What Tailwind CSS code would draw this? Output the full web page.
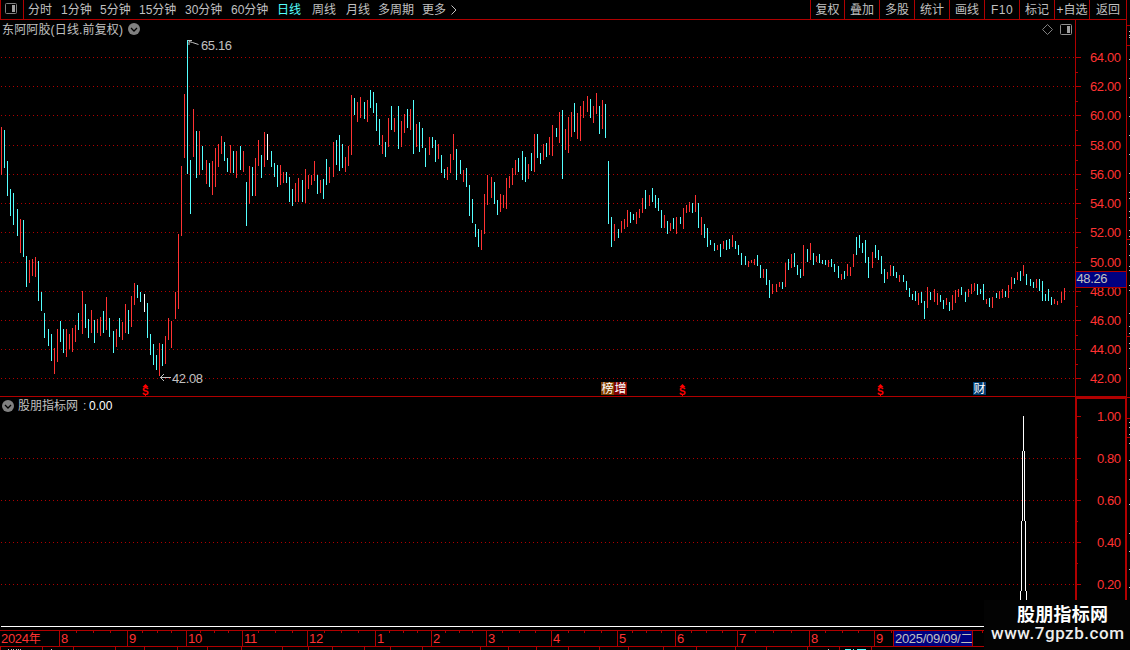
<!DOCTYPE html>
<html lang="zh-CN">
<head>
  <meta charset="UTF-8">
  <meta name="viewport" content="width=device-width, initial-scale=1.0">
  <title>东阿阿胶 日线</title>
  <script src="https://cdn.jsdelivr.net/npm/@tailwindcss/browser@4"></script>
</head>
<body class="relative flex h-[650px] w-[1130px] overflow-hidden bg-black font-['Liberation_Sans','Noto_Sans_CJK_SC',sans-serif] text-[12px] leading-none text-[#c0c0c0]">
  <div class="flex w-[1127px] flex-col">

    <!-- Toolbar -->
    <header class="flex h-5 border-b border-[#b00000] whitespace-nowrap">
      <div class="w-6 border-x border-[#b00000] pt-[3px] pl-1">
        <svg width="12" height="11" viewBox="0 0 12 11"><rect x=".5" y=".5" width="11" height="10" rx="1" fill="none" stroke="#808080"/><rect x="7" y="2" width="3" height="7" fill="#a0a0a0"/></svg>
      </div>
      <nav class="flex flex-1 items-center pl-1">
        <span class="w-[33px]">分时</span>
        <span class="w-[39px]">1分钟</span>
        <span class="w-[39px]">5分钟</span>
        <span class="w-[46px]">15分钟</span>
        <span class="w-[46px]">30分钟</span>
        <span class="w-[46px]">60分钟</span>
        <span class="w-[35px] text-[#54ffff]">日线</span>
        <span class="w-[34px]">周线</span>
        <span class="w-[32px]">月线</span>
        <span class="w-[44px]">多周期</span>
        <span class="w-[29px]">更多</span>
        <svg width="6" height="10" viewBox="0 0 6 10"><path d="M.5 .5L5 5L.5 9.5" fill="none" stroke="#c0c0c0"/></svg>
      </nav>
      <div class="flex w-[317px] border-r border-[#b00000] *:flex *:items-center *:justify-center *:border-l *:border-[#b00000]">
        <span class="w-[34px]">复权</span>
        <span class="w-[35px]">叠加</span>
        <span class="w-[35px]">多股</span>
        <span class="w-[35px]">统计</span>
        <span class="w-[35px]">画线</span>
        <span class="w-[35px] tracking-[0.5px]">F10</span>
        <span class="w-[35px]">标记</span>
        <span class="w-[35px]">+自选</span>
        <span class="w-[37px]">返回</span>
      </div>
    </header>

    <!-- Price chart -->
    <section class="flex h-[377px] border-b border-[#b00000]">
      <div class="flex w-[1075px] flex-col">
        <div class="flex h-[18px] items-center pr-[3px] pl-0.5">
          <span class="w-[126px] pt-px tracking-[0.15px] whitespace-nowrap">东阿阿胶(日线.前复权)</span>
          <svg width="12" height="12" viewBox="0 0 12 12"><circle cx="6" cy="6" r="6" fill="#808080"/><path d="M3 5L6 8L9 5" fill="none" stroke="#000" stroke-width="1.3"/></svg>
          <svg class="ml-auto" width="11" height="11" viewBox="0 0 11 11"><path d="M5.5 .5L10.5 5.5L5.5 10.5L.5 5.5Z" fill="none" stroke="#808080"/></svg>
          <svg class="ml-[7px]" width="12" height="11" viewBox="0 0 12 11"><rect x=".5" y=".5" width="11" height="10" rx="1" fill="none" stroke="#909090"/><rect x="7" y="2" width="3" height="7" fill="#a0a0a0"/></svg>
        </div>
        <svg id="price" width="1075" height="358" viewBox="0 38 1075 358">
          <g id="price-grid"></g>
          <g id="bars" shape-rendering="crispEdges"></g>
          <path d="M188 40.500H192M189 45V41.500L192.500 42.500L198.500 44.500" fill="none" stroke="#c0c0c0"/>
          <text x="201" y="50" font-size="13" textLength="31" fill="#c0c0c0">65.16</text>
          <path d="M160 377.500H171M164 374L160.500 377.500L164 381" fill="none" stroke="#c0c0c0"/>
          <text x="172" y="383" font-size="13" textLength="31" fill="#c0c0c0">42.08</text>
          <g id="dividends"></g>
          <g font-size="12" fill="#fff">
            <rect x="601" y="382" width="13" height="13" fill="#804000"/><text x="601.500" y="393">榜</text>
            <rect x="614" y="382" width="13" height="13" fill="#800000"/><text x="614.500" y="393">增</text>
            <rect x="973" y="382" width="13" height="13" fill="#003b70"/><text x="973.500" y="393">财</text>
          </g>
        </svg>
      </div>
      <svg id="price-axis" class="border-r border-l border-[#b00000]" width="52" height="376" viewBox="1076 20 50 376"></svg>
    </section>

    <!-- Indicator chart -->
    <section class="flex h-[233px]">
      <div class="flex w-[1075px] flex-col">
        <div class="flex h-[17px] items-center pl-0.5">
          <svg width="12" height="12" viewBox="0 0 12 12"><circle cx="6" cy="6" r="6" fill="#808080"/><path d="M3 5L6 8L9 5" fill="none" stroke="#000" stroke-width="1.3"/></svg>
          <span class="ml-1 w-[65px]">股朋指标网</span>
          <span class="w-1.5">:</span>
          <span class="text-white">0.00</span>
        </div>
        <svg width="1075" height="216" viewBox="0 414 1075 216" shape-rendering="crispEdges">
          <g id="signal-grid"></g>
          <path d="M1 626.500H1075M1023.500 416V451M1022.500 451V521M1024.500 451V521M1021.500 521V591M1025.500 521V591M1020.500 591V626M1026.500 591V626" fill="none" stroke="#fff"/>
        </svg>
      </div>
      <svg id="signal-axis" class="border-x-2 border-t-2 border-[#b00000]" width="52" height="233" viewBox="1077 399 48 231"></svg>
    </section>

    <!-- Time axis -->
    <footer class="flex h-[17px] border-y border-[#b00000] text-[13px] tracking-[-0.3px] text-[#ff3232] *:border-r *:border-[#b00000] *:pt-px *:pl-px">
      <span class="w-[60px]">2024<span class="text-[12px]">年</span></span>
      <span class="w-[68px]">8</span>
      <span class="w-[59px]">9</span>
      <span class="w-[56px]">10</span>
      <span class="w-[65px]">11</span>
      <span class="w-[68px]">12</span>
      <span class="w-[56px]">1</span>
      <span class="w-[55px]">2</span>
      <span class="w-[65px]">3</span>
      <span class="w-[66px]">4</span>
      <span class="w-[58px]">5</span>
      <span class="w-[62px]">6</span>
      <span class="w-[72px]">7</span>
      <span class="w-[65px]">8</span>
      <span class="w-[19px]">9</span>
      <span class="w-[79px] bg-[#000080] whitespace-nowrap text-[#c0c0c0]">2025/09/09/<span class="text-[12px]">二</span></span>
    </footer>
    <svg id="tabs" width="1127" height="3" viewBox="0 647 1127 3" shape-rendering="crispEdges"></svg>
  </div>

  <!-- Edge of the neighbouring panel -->
  <svg id="edge" width="3" height="650" viewBox="1127 0 3 650" shape-rendering="crispEdges"></svg>

  <!-- Minor ticks over the time axis -->
  <svg id="time-ticks" class="absolute top-[631px] left-0" width="984" height="2" viewBox="0 631 984 2" shape-rendering="crispEdges"></svg>

  <!-- Site mark -->
  <div class="absolute top-[600px] left-[984px] h-[50px] w-[146px] bg-[#030303]">
    <svg width="146" height="50" viewBox="984 600 146 50" fill="#fff">
      <text x="1017" y="621" font-size="18" font-weight="700" textLength="91">股朋指标网</text>
      <text x="991" y="639" font-size="17" font-weight="500" textLength="133" font-family="Roboto" fill="#eee">www.7gpzb.com</text>
    </svg>
  </div>

  <script>
    // x, top, bottom, colour (r = up, c = down, w = flat)
    const bars = `1 127 175 r,4 130 168 c,7 161 196 c,10 189 216 c,13 193 225 c,17 209 236 c,20 219 253 r,23 220 257 c,26 256 287 c,29 260 283 r,
32 259 276 r,35 257 277 r,38 261 301 c,41 292 311 c,44 313 338 c,48 329 346 c,51 334 361 c,54 348 374 r,57 329 362 r,60 321 342 c,
63 329 353 c,66 329 357 r,69 334 349 r,72 328 352 r,75 325 342 r,78 313 330 c,82 291 334 r,85 304 328 c,88 319 338 c,91 310 333 r,
94 320 343 c,97 319 333 r,100 317 336 r,103 311 333 c,106 297 330 r,109 318 337 c,113 331 353 c,116 329 347 r,119 318 337 c,122 322 340 r,
125 304 333 r,128 310 334 c,131 296 327 r,134 283 305 r,137 285 298 c,140 292 302 c,144 294 312 w,147 303 338 c,150 334 355 c,153 344 365 c,
156 355 370 c,159 343 376 r,162 344 366 c,165 336 364 r,168 318 340 r,171 321 348 r,175 292 319 r,178 234 309 r,181 166 236 r,184 94 158 r,
187 40 174 c,190 160 214 c,193 109 157 r,196 131 178 c,199 131 175 r,202 146 170 c,206 160 184 r,209 163 187 c,212 161 195 r,215 148 187 r,
218 144 167 r,221 136 154 r,224 142 161 c,227 158 172 c,230 145 173 r,233 151 173 c,236 151 178 r,240 146 170 c,243 151 172 r,246 182 226 c,
249 166 204 r,252 167 196 c,255 158 196 r,258 140 166 r,261 155 178 c,264 132 167 r,267 134 160 w,271 151 167 c,274 163 177 c,277 165 187 c,
280 165 185 r,283 172 183 r,286 172 183 c,289 177 202 c,292 189 206 c,295 183 202 r,298 178 202 r,302 180 202 c,305 169 203 r,308 175 189 r,
311 175 185 r,314 161 181 r,317 175 194 c,320 180 193 r,323 179 199 c,326 159 185 c,329 167 183 r,333 142 177 r,336 140 165 c,339 135 171 c,
342 144 168 c,345 157 172 r,348 146 166 r,351 95 155 r,354 98 115 c,357 102 122 r,360 97 118 r,364 102 119 c,367 100 122 r,370 90 108 c,
373 92 113 c,376 103 131 c,379 119 145 c,382 135 154 r,385 142 157 c,388 118 147 r,391 106 130 c,394 118 132 r,398 106 149 c,401 121 147 r,
404 114 133 r,407 109 128 c,410 109 130 r,413 100 154 c,416 124 147 r,419 122 152 c,422 128 148 c,425 148 167 c,429 137 155 r,432 137 148 c,
435 140 162 c,438 144 159 r,441 155 173 c,444 169 178 c,447 167 180 r,450 154 173 r,453 134 160 r,456 149 180 c,460 160 174 c,463 170 182 r,
466 168 187 c,469 185 216 c,472 199 223 c,475 224 237 c,478 229 247 c,481 230 250 r,484 194 234 r,487 175 205 r,491 177 198 r,494 182 204 c,
497 200 215 c,500 194 212 r,503 195 208 r,506 178 209 r,509 176 188 r,512 168 185 r,515 160 175 r,518 158 172 c,522 151 180 c,525 157 182 c,
528 164 179 r,531 153 171 c,534 134 172 r,537 134 158 c,540 153 164 c,543 144 160 r,546 143 157 c,549 137 155 r,552 125 156 r,556 128 137 c,
559 112 143 r,562 110 179 c,565 129 150 r,568 117 153 r,571 112 137 r,574 103 132 c,577 113 139 r,580 106 141 r,583 101 118 r,587 96 112 r,
590 99 118 c,593 106 123 r,596 93 114 r,599 106 134 c,602 100 129 r,605 104 138 c,608 161 224 c,611 217 247 c,614 224 241 r,618 229 238 c,
621 221 233 r,624 219 229 r,627 210 227 r,630 212 223 c,633 214 220 c,636 212 224 r,639 209 218 r,642 198 213 r,645 190 209 c,649 195 206 r,
652 188 202 c,655 195 208 c,658 198 211 c,661 210 228 c,664 215 228 r,667 221 234 c,670 223 231 r,673 218 229 c,676 217 234 r,680 217 224 c,
683 208 229 r,686 205 213 r,689 202 212 r,692 203 213 c,695 195 212 r,698 203 228 c,701 217 235 r,704 224 238 c,707 228 247 c,710 240 245 c,
714 243 251 c,717 245 250 r,720 244 257 c,723 241 249 r,726 240 250 c,729 239 249 c,732 235 247 r,735 241 249 c,738 245 255 c,741 253 265 c,
745 256 265 c,748 261 267 r,751 260 263 r,754 259 265 r,757 255 266 c,760 265 278 c,763 269 278 r,766 269 285 c,769 280 298 c,772 284 294 r,
776 284 292 r,779 282 287 r,782 282 289 c,785 263 287 r,788 259 270 c,791 254 268 r,794 253 267 c,797 265 275 c,800 269 278 c,803 245 276 r,
807 249 262 c,810 243 260 r,813 253 265 c,816 256 262 r,819 254 263 c,822 260 264 c,825 260 265 c,828 260 267 r,831 259 267 c,834 264 272 c,
838 266 278 c,841 274 280 r,844 271 279 c,847 264 276 r,850 267 276 r,853 254 267 r,856 237 255 c,859 235 248 c,862 243 253 c,865 240 263 c,
868 257 278 c,872 252 268 r,875 245 258 c,878 250 260 c,881 256 274 c,884 269 283 c,887 272 279 r,890 265 276 r,893 266 276 c,896 272 278 c,
899 275 282 r,903 275 282 c,906 281 290 c,909 288 297 c,912 294 300 c,915 291 301 c,918 293 305 r,921 292 303 c,924 301 319 c,927 287 308 r,
930 292 300 c,934 289 302 r,937 293 305 r,940 295 302 c,943 300 309 c,946 298 305 r,949 302 311 c,952 295 310 r,955 290 303 r,958 289 297 r,
961 287 295 c,965 292 302 c,968 289 297 r,971 284 294 r,974 283 291 r,977 284 295 c,980 289 294 c,983 284 300 c,986 299 304 r,989 298 307 c,
992 297 308 r,996 293 298 c,999 291 299 r,1002 289 298 r,1005 291 297 c,1008 285 298 r,1011 277 289 r,1014 278 284 c,1017 272 280 r,1020 271 281 c,
1023 265 276 r,1026 274 285 c,1030 279 286 c,1033 282 288 c,1036 279 288 r,1039 279 291 c,1042 281 301 c,1045 294 301 c,1048 289 301 c,1051 297 305 c,
1054 299 304 r,1057 301 305 r,1061 292 303 r,1064 288 300 r`;
    const colors = { r: '#ff3232', c: '#54ffff', w: '#ffffff' };
    const fill = (id, html) => { document.getElementById(id).innerHTML = html; };
    const rect = (x, y, w, h, color) => `<rect x="${x}" y="${y}" width="${w}" height="${h}" fill="${color}" shape-rendering="crispEdges"/>`;
    const dots = y => `<path d="M1 ${y + 0.5}H1075" stroke="#b00000" stroke-dasharray="1 3" shape-rendering="crispEdges"/>`;

    fill('bars', bars.split(',').map(bar => {
      const [x, top, bottom, c] = bar.trim().split(' ');
      return rect(x, top, 1, bottom - top, colors[c]);
    }).join(''));

    // Price scale
    const rows = [57, 86, 115, 145, 174, 203, 232, 262, 291, 320, 349, 378];
    fill('price-grid', rows.map(dots).join(''));
    fill('price-axis', rows.map((y, i) =>
      rect(1076, y, 5, 1, '#b00000') +
      (i < 11 ? rect(1076, y + 15, 2, 1, '#b00000') : '') +
      `<text x="1090" y="${y + 5}" font-size="13" textLength="31" fill="#ff3232">${64 - i * 2}.00</text>`
    ).join('') +
      rect(1076, 271, 50, 17, '#b00000') + rect(1076, 272, 50, 15, '#000080') +
      '<text x="1076.5" y="283" font-size="13" textLength="31" fill="#c0c0c0">48.26</text>');

    // Indicator scale
    const levels = [416, 458, 500, 542, 584];
    fill('signal-grid', levels.slice(1).map(dots).join(''));
    fill('signal-axis', levels.map((y, i) =>
      rect(1077, y, 4, 1, '#b00000') + rect(1077, y + 21, 1, 1, '#b00000') +
      `<text x="1097" y="${y + 5}" font-size="13" textLength="24" fill="#ff3232">${(1 - i * 0.2).toFixed(2)}</text>`
    ).join(''));

    // Dividend markers
    fill('dividends', [142, 679, 877].map(x =>
      `<path d="M${x + 0.5} 387L${x + 3.5} 384L${x + 6.5} 387Z" fill="#f00"/><text x="${x}" y="395" font-size="10" font-weight="700" fill="#f00">S</text>` +
      rect(x + 3, 395, 1, 1, '#f00')
    ).join(''));

    fill('time-ticks', [76, 93, 110, 142, 157, 171, 200, 214, 228, 258, 275, 292, 324, 341, 358, 389, 403, 417, 445, 459, 472, 502, 519, 535,
      568, 584, 601, 632, 646, 661, 691, 706, 722, 755, 773, 791, 825, 842, 858, 891, 982].map(x => rect(x, 631, 1, 2, '#b00000')).join(''));
    fill('tabs', [0, 42, 73, 115, 144, 177, 207, 241, 282, 308, 332, 364, 390, 422, 480, 508, 536, 568, 599, 628, 663, 696, 735, 766, 807, 839, 871]
      .map(x => rect(x, 647, 1, 3, '#b00000')).join('') +
      [8, 11, 13, 16, 18, 20, 51, 828].map(x => rect(x, 649, 1, 1, '#c0c0c0')).join('') +
      rect(845, 649, 6, 1, '#54ffff') + rect(853, 649, 1, 1, '#54ffff') + rect(857, 649, 9, 1, '#54ffff'));
    fill('edge', [25, 45, 239, 336, 397, 418, 437].map(y => rect(1127, y, 3, 1, '#b00000')).join('') +
      [31, 35, 37, 59, 78, 97, 116, 135, 154, 173, 192, 198, 211, 217, 230, 236, 244, 255, 266, 270, 285, 290, 313, 326, 333, 343, 348, 368,
        422, 427, 434, 443, 460, 479, 504, 533, 551, 569, 587].map(y => rect(1129, y, 1, 1, '#c0c0c0')).join(''));
  </script>
</body>
</html>
